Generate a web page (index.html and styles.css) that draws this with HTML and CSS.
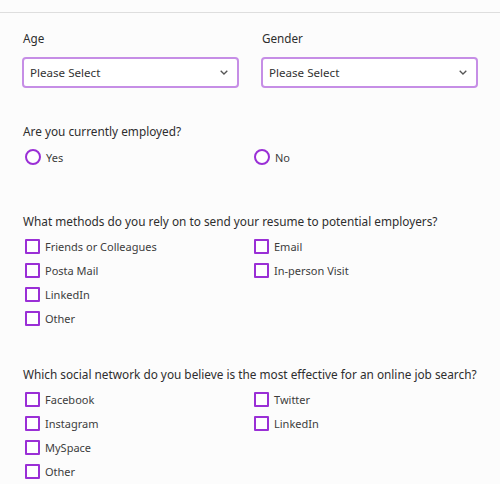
FILE: index.html
```html
<!DOCTYPE html>
<html>
<head>
<meta charset="utf-8">
<link rel="stylesheet" href="styles.css">
</head>
<body>
<div class="topbar"></div>
<form class="form">
  <div class="pair">
    <div class="field">
      <div class="label">Age</div>
      <div class="select"><span>Please Select</span>
        <svg class="chev" width="8" height="5" viewBox="0 0 8 5"><path d="M0.7 0.7l3.3 3.3 3.3-3.3" fill="none" stroke="#555" stroke-width="1.3"/></svg>
      </div>
    </div>
    <div class="field">
      <div class="label">Gender</div>
      <div class="select"><span>Please Select</span>
        <svg class="chev" width="8" height="5" viewBox="0 0 8 5"><path d="M0.7 0.7l3.3 3.3 3.3-3.3" fill="none" stroke="#555" stroke-width="1.3"/></svg>
      </div>
    </div>
  </div>

  <div class="question q-first">Are you currently employed?</div>
  <div class="options">
    <div class="col">
      <div class="opt"><span class="radio"></span>Yes</div>
    </div>
    <div class="col">
      <div class="opt"><span class="radio"></span>No</div>
    </div>
  </div>

  <div class="question q-second">What methods do you rely on to send your resume to potential employers?</div>
  <div class="options">
    <div class="col">
      <div class="opt"><span class="box"></span>Friends or Colleagues</div>
      <div class="opt"><span class="box"></span>Posta Mail</div>
      <div class="opt"><span class="box"></span>LinkedIn</div>
      <div class="opt"><span class="box"></span>Other</div>
    </div>
    <div class="col">
      <div class="opt"><span class="box"></span>Email</div>
      <div class="opt"><span class="box"></span>In-person Visit</div>
    </div>
  </div>

  <div class="question q-third">Which social network do you believe is the most effective for an online job search?</div>
  <div class="options">
    <div class="col">
      <div class="opt"><span class="box"></span>Facebook</div>
      <div class="opt"><span class="box"></span>Instagram</div>
      <div class="opt"><span class="box"></span>MySpace</div>
      <div class="opt"><span class="box"></span>Other</div>
    </div>
    <div class="col">
      <div class="opt"><span class="box"></span>Twitter</div>
      <div class="opt"><span class="box"></span>LinkedIn</div>
    </div>
  </div>
</form>
</body>
</html>
```

FILE: styles.css
```css
html, body {
  margin: 0;
  padding: 0;
}
body {
  background: #fcfcfc;
  font-family: "Noto Sans", "DejaVu Sans", sans-serif;
  font-size: 12px;
  color: #2e2e2e;
  width: 500px;
  height: 484px;
  overflow: hidden;
}
.topbar {
  height: 12px;
  border-bottom: 1px solid #dedede;
}
.form {
  padding: 16px 0 0 23px;
}
.pair {
  display: grid;
  grid-template-columns: 217px 217px;
  column-gap: 22px;
  margin-left: -1px;
}
.label {
  font-size: 11.7px;
  line-height: 18px;
  margin: 0 0 10px 1px;
  color: #2e2e2e;
}
.select {
  box-sizing: border-box;
  height: 31px;
  border: 2px solid #c68ee6;
  border-radius: 4px;
  background: #fff;
  display: flex;
  align-items: center;
  justify-content: space-between;
  padding: 0 9px 0 6px;
  color: #333;
  font-size: 11.6px;
}
.chev {
  display: block;
}
.question {
  font-size: 11.8px;
  line-height: 18px;
  margin-bottom: 4px;
  color: #2e2e2e;
  white-space: nowrap;
}
.q-first { margin-top: 34px; margin-bottom: 5px; }
.q-second { margin-top: 43px; }
.q-third { margin-top: 35px; }
.options {
  display: grid;
  grid-template-columns: 229px 1fr;
}
.opt {
  height: 24px;
  display: flex;
  align-items: center;
  color: #3d3d3d;
  font-size: 11px;
}
.radio {
  box-sizing: border-box;
  width: 16px;
  height: 16px;
  border: 2px solid #9a2fd6;
  border-radius: 50%;
  margin: 0 5px 0 2px;
  background: #fff;
}
.box {
  box-sizing: border-box;
  width: 15px;
  height: 15px;
  border: 2px solid #9a2fd6;
  border-radius: 1px;
  margin: 0 5px 0 2px;
  background: #fff;
}
```
